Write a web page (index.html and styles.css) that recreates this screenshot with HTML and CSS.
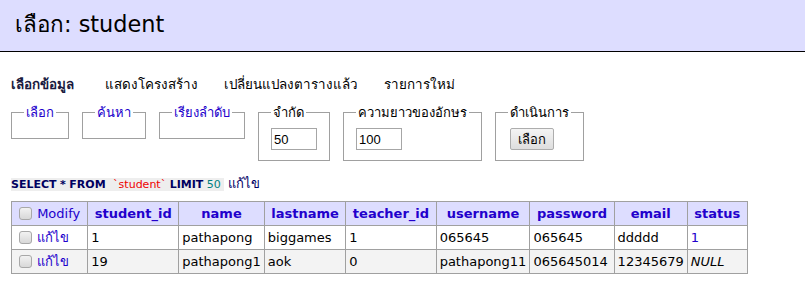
FILE: index.html
```html
<!DOCTYPE html>
<html lang="th">
<head>
<meta charset="utf-8">
<title>เลือก: student</title>
<link rel="stylesheet" href="styles.css">
</head>
<body>
<div class="top">เลือก: student</div>
<div class="main">
  <div class="tabs">
    <span class="tab active">เลือกข้อมูล</span>
    <span class="tab">แสดงโครงสร้าง</span>
    <span class="tab">เปลี่ยนแปลงตารางแล้ว</span>
    <span class="tab">รายการใหม่</span>
  </div>
  <form class="filters">
    <fieldset class="fs fs-short"><legend class="lnk">เลือก</legend></fieldset>
    <fieldset class="fs fs-short"><legend class="lnk">ค้นหา</legend></fieldset>
    <fieldset class="fs fs-short"><legend class="lnk">เรียงลำดับ</legend></fieldset>
    <fieldset class="fs"><legend>จำกัด</legend><input class="num" type="text" value="50"></fieldset>
    <fieldset class="fs"><legend>ความยาวของอักษร</legend><input class="num" type="text" value="100"></fieldset>
    <fieldset class="fs"><legend>ดำเนินการ</legend><button class="btn" type="button">เลือก</button></fieldset>
  </form>
  <p class="sql"><code class="q"><b class="kw">SELECT</b> <b class="kw">*</b> <b class="kw">FROM</b> <span class="str">`student`</span> <b class="kw">LIMIT</b> <span class="numv">50</span>&nbsp;</code> <a class="edit">แก้ไข</a></p>
  <table class="grid">
    <thead>
      <tr>
        <th class="mod"><span class="cb"></span> <span class="modlink">Modify</span></th>
        <th>student_id</th><th>name</th><th>lastname</th><th>teacher_id</th><th>username</th><th>password</th><th>email</th><th>status</th>
      </tr>
    </thead>
    <tbody>
      <tr>
        <td class="mod"><span class="cb"></span> <a class="lnk">แก้ไข</a></td>
        <td>1</td><td>pathapong</td><td>biggames</td><td>1</td><td>065645</td><td>065645</td><td>ddddd</td><td class="lnk">1</td>
      </tr>
      <tr class="odd">
        <td class="mod"><span class="cb"></span> <a class="lnk">แก้ไข</a></td>
        <td>19</td><td>pathapong1</td><td>aok</td><td>0</td><td>pathapong11</td><td>065645014</td><td>12345679</td><td><i>NULL</i></td>
      </tr>
    </tbody>
  </table>
</div>
</body>
</html>
```
FILE: styles.css
```css
body {
  margin: 0;
  font-family: "DejaVu Sans", Tahoma, sans-serif;
  font-size: 13px;
  color: #000;
  background: #fff;
}
.top {
  background: #ddf;
  height: 52px;
  box-sizing: border-box;
  padding: 6px 0 0 15px;
  font-size: 22.4px;
  border-bottom: 1px solid #000;
}
.main {
  padding: 0 11px;
}
.tabs {
  display: flex;
  gap: 26px;
  margin-top: 22px;
  height: 20px;
  font-size: 13.4px;
}
.tab.active {
  font-weight: bold;
  color: #1a1a40;
  padding-right: 5px;
}
.filters {
  display: flex;
  align-items: flex-start;
  gap: 13px;
  margin: 8px 0 0;
}
.fs {
  margin: 0;
  border: 1px solid #a0a0a0;
  padding: 5px 12px 10px;
}
.fs legend {
  padding: 0 2px;
  font-size: 13px;
}
.fs-short {
  height: 5px;
}
.lnk {
  color: #2200cc;
}
.num {
  width: 46px;
  height: 22px;
  box-sizing: border-box;
  border: 1px solid #a6a6a6;
  font: 13px "Liberation Sans", Arial, sans-serif;
  padding: 1px 2px;
}
.btn {
  height: 22px;
  padding: 0 7px;
  font-size: 13px;
  font-family: "DejaVu Sans", Tahoma, sans-serif;
  border: 1px solid #adadad;
  border-radius: 2px;
  background: linear-gradient(#f4f4f4, #dedede);
  margin-left: 2px;
}
.sql {
  margin: 12px 0 0;
  height: 20px;
  font-size: 13px;
}
.q {
  background: #eee;
  font-family: "DejaVu Sans", sans-serif;
  font-size: 11px;
}
.kw { color: #000060; }
.str { color: #e00; margin-left: 4px; }
.numv { color: #008080; }
.edit { color: #000066; }
.grid {
  border-collapse: collapse;
  border: 1px solid #a0a0a0;
  margin-top: 8px;
}
.grid th, .grid td {
  border: 1px solid #a0a0a0;
  height: 23px;
  padding: 0 3px;
  white-space: nowrap;
  text-align: left;
}
.grid th {
  background: #ddf;
  color: #2200cc;
  text-align: center;
  font-size: 13px;
  padding: 0 6.5px;
}
.grid th.mod, .grid td.mod {
  font-weight: normal;
  padding: 0 7px 0 3px;
}
.grid tr.odd td {
  background: #f3f3f3;
}
.cb {
  display: inline-block;
  box-sizing: border-box;
  width: 13px;
  height: 13px;
  border: 1px solid #a8a8a8;
  border-radius: 3px;
  background: linear-gradient(#f2f2f2, #d8d8d8);
  vertical-align: -2px;
  margin: 0 1px 0 4px;
}
.modlink { color: #2200cc; }
```
